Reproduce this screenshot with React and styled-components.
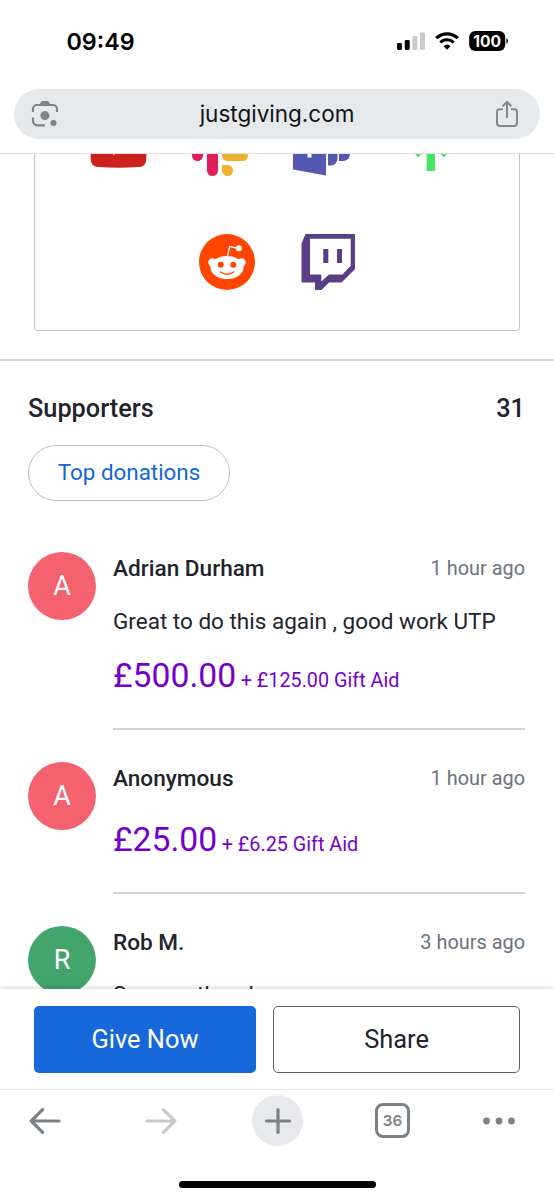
import React from "react";
import styled, { createGlobalStyle } from "styled-components";

const supporters = [
  {
    name: "Adrian Durham",
    time: "1 hour ago",
    message: "Great to do this again , good work UTP",
    amount: "£500.00",
    giftAid: "+ £125.00 Gift Aid",
    color: "#f4616f",
  },
  {
    name: "Anonymous",
    time: "1 hour ago",
    amount: "£25.00",
    giftAid: "+ £6.25 Gift Aid",
    color: "#f4616f",
  },
  {
    name: "Rob M.",
    time: "3 hours ago",
    message: "See you there!",
    color: "#43a56b",
  },
];

function StatusIcons() {
  return (
    <svg width="112" height="22" viewBox="0 0 112 22">
      <rect x="0" y="13" width="5" height="7" rx="1.4" />
      <rect x="7.7" y="10" width="5" height="10" rx="1.4" />
      <rect x="15.4" y="6" width="5" height="14" rx="1.4" fill="#cbcbcb" />
      <rect x="23" y="2.4" width="5" height="17.6" rx="1.4" fill="#cbcbcb" />
      <g fill="none" stroke="#000" strokeWidth="3.1">
        <path d="M39.2 8.2a15.6 15.6 0 0 1 21.6 0" />
        <path d="M43.3 12.5a9.7 9.7 0 0 1 13.4 0" />
      </g>
      <path d="M50 19.7l-3.5-3.5a5.2 5.2 0 0 1 7 0z" />
      <rect x="72.2" y="1" width="36" height="20" rx="6" />
      <path d="M109.4 8.2c2 .6 2 5 0 5.6z" />
      <text
        x="90.2"
        y="16.6"
        fill="#fff"
        fontSize="15.6"
        fontWeight="700"
        textAnchor="middle"
      >
        100
      </text>
    </svg>
  );
}

function LensIcon() {
  return (
    <svg width="28" height="28" viewBox="0 0 28 28" fill="none">
      <path
        d="M2 12V9a4 4 0 0 1 4-4h16a4 4 0 0 1 4 4v3M2 17.5V21a4.3 4.3 0 0 0 4.3 4.3H14"
        stroke="#7f8386"
        strokeWidth="2.2"
      />
      <path
        d="M8.6 4.5l1.3-2.3q.6-1.1 1.7-1.1h4.8q1.1 0 1.7 1.1l1.3 2.3z"
        fill="#7f8386"
      />
      <circle cx="13.9" cy="15.6" r="4.5" fill="#7f8386" />
      <circle cx="22.5" cy="22.9" r="3" fill="#7f8386" />
    </svg>
  );
}

function ShareIcon() {
  return (
    <svg width="24" height="28" viewBox="0 0 24 28">
      <path
        d="M8 9.3H4.5A2.5 2.5 0 0 0 2 11.8V23a3 3 0 0 0 3 3h14a3 3 0 0 0 3-3V11.8a2.5 2.5 0 0 0-2.5-2.5H16M12 18V2M7.6 6.3L12 1.900l4.400 4.400"
        fill="none"
        stroke="#85898d"
        strokeWidth="2"
      />
    </svg>
  );
}

function YoutubeIcon() {
  return (
    <svg width="57" height="56" viewBox="0 0 57 56">
      <path
        d="M8 9Q28.5 7.5 49 9c5 .4 6.7 3 7.2 7q.6 11 0 24c-.5 4-2.2 6.6-7.2 7q-20.5 1.5-41 0c-5-.4-6.7-3-7.2-7q-.6-12 0-24c.5-4 2.2-6.6 7.2-7z"
        fill="#cd201f"
      />
      <path d="M23 20v15l15-7.5z" fill="#fff" />
    </svg>
  );
}

function SlackIcon() {
  return (
    <svg width="56" height="56" viewBox="0 0 56 56">
      <rect y="15" width="26" height="11" rx="5.5" fill="#36c5f0" />
      <path d="M26 11h-5.5A5.5 5.5 0 1 1 26 5.5z" fill="#36c5f0" />
      <rect x="30" width="11" height="26" rx="5.5" fill="#2eb67d" />
      <path d="M45 26v-5.5a5.5 5.5 0 1 1 5.5 5.5z" fill="#2eb67d" />
      <rect x="15" y="30" width="11" height="26" rx="5.5" fill="#e01e5a" />
      <path d="M11 30v5.5A5.5 5.5 0 1 1 5.5 30z" fill="#e01e5a" />
      <rect x="30" y="30" width="26" height="11" rx="5.5" fill="#ecb22e" />
      <path d="M30 45h5.5a5.5 5.5 0 1 1-5.5 5.5z" fill="#ecb22e" />
    </svg>
  );
}

function TeamsIcon() {
  return (
    <svg width="57" height="56" viewBox="0 0 57 56">
      <g fill="#5558af">
        <path d="M0 6.5L33 0v55.5L0 49.5z" />
        <path d="M35 17h9.5v22a6.500 6.500 0 0 1-6.500 6.500h-3z" />
        <path d="M46 19h11v15a7 7 0 0 1-7 7h-4z" />
        <circle cx="39" cy="9" r="6" />
        <circle cx="51" cy="12" r="4.5" />
      </g>
      <path d="M8 18.5l17-1v4l-6.500.4v15.600h-4V22.200l-6.500.3z" fill="#fff" />
    </svg>
  );
}

function LinktreeIcon() {
  return (
    <svg width="44" height="56" viewBox="0 0 44 56" fill="#43e660">
      <path d="M17.7 0H26v14.5L36 4.5l5.6 5.6-10 9.900H44v7.800H31.500l5.500 5.500h-6L22 24l-9 9.300H7l5.500-5.500H0V20h12.300L2.300 10.100l5.600-5.600 9.800 10z" />
      <path d="M17.7 34H26v17h-8.300zM5.300 33.300H13l-3.800 3.900zM31 33.300h7.700l-3.900 3.900z" />
    </svg>
  );
}

function RedditIcon() {
  return (
    <svg width="56" height="56" viewBox="0 0 56 56">
      <circle cx="28" cy="28" r="28" fill="#ff4500" />
      <g fill="#fff">
        <circle cx="13.5" cy="28.5" r="4.2" />
        <circle cx="42.5" cy="28.5" r="4.2" />
        <ellipse cx="28" cy="33.5" rx="16.5" ry="11.5" />
        <circle cx="39.8" cy="14.3" r="3" />
      </g>
      <path
        d="M28.3 23l2.4-10.500 8.500 1.800"
        fill="none"
        stroke="#fff"
        strokeWidth="1.3"
      />
      <circle cx="21.7" cy="30.8" r="3" fill="#ff4500" />
      <circle cx="34.3" cy="30.8" r="3" fill="#ff4500" />
      <path
        d="M21.5 38q6.500 4.600 13 0"
        fill="none"
        stroke="#ff4500"
        strokeWidth="1.4"
        strokeLinecap="round"
      />
    </svg>
  );
}

function TwitchIcon() {
  return (
    <svg width="56" height="56" viewBox="0 0 56 56">
      <path
        d="M4.5 0H54v35L40.5 48.5H28L20.5 56H14v-7.500H.5v-39z"
        fill="#5a3e85"
      />
      <path d="M9 4.7h40.700v27l-8.300 8.800H28l-7.700 7v-7H9z" fill="#fff" />
      <path d="M22.300 15h5v14h-5zM36 15h5v14h-5z" fill="#5a3e85" />
    </svg>
  );
}

function Supporter({ supporter }) {
  return (
    <SupporterRow>
      <Avatar $color={supporter.color}>{supporter.name[0]}</Avatar>
      <SupporterBody>
        <SupporterTop>
          <SupporterName>{supporter.name}</SupporterName>
          <SupporterTime>{supporter.time}</SupporterTime>
        </SupporterTop>
        {supporter.message && <Message>{supporter.message}</Message>}
        {supporter.amount && (
          <Donation>
            <Amount>{supporter.amount}</Amount>
            <GiftAid>{supporter.giftAid}</GiftAid>
          </Donation>
        )}
      </SupporterBody>
    </SupporterRow>
  );
}

function Toolbar() {
  return (
    <ToolbarContainer>
      <ToolbarItem>
        <ToolbarIcon width="32" height="28" viewBox="0 0 32 28">
          <path d="M30 14H2.2M13.6 2.7L2.2 14l11.4 11.3" />
        </ToolbarIcon>
      </ToolbarItem>
      <ToolbarItem>
        <ToolbarIcon $disabled width="32" height="28" viewBox="0 0 32 28">
          <path d="M2 14h27.8M18.4 2.7L29.8 14 18.4 25.3" />
        </ToolbarIcon>
      </ToolbarItem>
      <ToolbarItem>
        <NewTab>
          <ToolbarIcon width="28" height="28" viewBox="0 0 28 28">
            <path d="M2.5 14h23M14 2.5v23" />
          </ToolbarIcon>
        </NewTab>
      </ToolbarItem>
      <ToolbarItem>
        <TabCount>36</TabCount>
      </ToolbarItem>
      <ToolbarItem>
        <svg width="34" height="8" viewBox="0 0 34 8" fill="#7b8287">
          <circle cx="4.5" cy="4" r="3.4" />
          <circle cx="17" cy="4" r="3.4" />
          <circle cx="29.5" cy="4" r="3.4" />
        </svg>
      </ToolbarItem>
    </ToolbarContainer>
  );
}

function App() {
  return (
    <Screen>
      <GlobalStyle />
      <StatusBar>
        <Clock>09:49</Clock>
        <StatusIcons />
      </StatusBar>
      <BrowserHeader>
        <AddressBar>
          <LensIcon />
          <Url>justgiving.com</Url>
          <ShareIcon />
        </AddressBar>
      </BrowserHeader>
      <Page>
        <ShareBox>
          <IconRow>
            <YoutubeIcon />
            <SlackIcon />
            <TeamsIcon />
            <TreeCell>
              <LinktreeIcon />
            </TreeCell>
          </IconRow>
          <IconRow $last>
            <RedditIcon />
            <TwitchIcon />
          </IconRow>
        </ShareBox>
        <SupportersSection>
          <SectionHeading>
            <span>Supporters</span>
            <span>31</span>
          </SectionHeading>
          <TopDonations>Top donations</TopDonations>
          <SupporterList>
            {supporters.map((supporter) => (
              <Supporter key={supporter.name} supporter={supporter} />
            ))}
          </SupporterList>
        </SupportersSection>
      </Page>
      <ActionBar>
        <ActionButton $primary>Give Now</ActionButton>
        <ActionButton>Share</ActionButton>
      </ActionBar>
      <Toolbar />
      <HomeIndicator />
    </Screen>
  );
}

export default App;

const GlobalStyle = createGlobalStyle`
  * {
    box-sizing: border-box;
  }

  body {
    margin: 0;
    background: #fff;
  }

  svg {
    display: block;
    flex-shrink: 0;
  }

  button {
    margin: 0;
    padding: 0;
    font-family: inherit;
  }
`;

const Screen = styled.div`
  display: flex;
  flex-direction: column;
  width: 554px;
  height: 1200px;
  overflow: hidden;
  background: #fff;
  color: #21242c;
  font-family: Roboto, "Liberation Sans", sans-serif;
`;

const StatusBar = styled.div`
  display: flex;
  justify-content: space-between;
  align-items: flex-start;
  height: 89px;
  padding: 30px 45px 0 66.5px;
  color: #000;
  font-family: Inter, sans-serif;
`;

const Clock = styled.div`
  font-size: 23.3px;
  font-weight: 600;
  line-height: 23px;
`;

const BrowserHeader = styled.div`
  height: 65px;
  padding: 0 14px;
  border-bottom: 1px solid #dfdfe1;
`;

const AddressBar = styled.div`
  display: flex;
  justify-content: space-between;
  align-items: center;
  height: 50px;
  padding: 0 21px 0 17px;
  border-radius: 25px;
  background: #e6e9ec;
`;

const Url = styled.div`
  color: #111417;
  font-family: Inter, sans-serif;
  font-size: 22.5px;
  line-height: 30px;
`;

const Page = styled.main`
  display: flow-root;
  height: 835px;
  overflow: hidden;
`;

const ShareBox = styled.div`
  display: flow-root;
  height: 177px;
  margin: 0 34px;
  border: 1px solid #c3c3c3;
  border-top: none;
  border-radius: 0 0 4px 4px;
`;

const IconRow = styled.div`
  display: flex;
  gap: ${({ $last }) => ($last ? "46px" : "45px")};
  margin-top: ${({ $last }) => ($last ? "58px" : "-34px")};
  padding-left: ${({ $last }) => ($last ? "164px" : "55px")};
`;

const TreeCell = styled.div`
  margin-left: 14px;
`;

const SupportersSection = styled.section`
  margin-top: 28px;
  padding: 33px 29px 0 28px;
  border-top: 2px solid #d8d8da;
`;

const SectionHeading = styled.h2`
  display: flex;
  justify-content: space-between;
  margin: 0;
  font-size: 25.3px;
  font-weight: 500;
  line-height: 30px;
`;

const TopDonations = styled.button`
  width: 202px;
  height: 56px;
  margin-top: 21px;
  padding-bottom: 2px;
  border: 1px solid #bcbcbe;
  border-radius: 28px;
  background: #fff;
  color: #1465d8;
  font-size: 22.4px;
`;

const SupporterList = styled.div`
  margin-top: 51px;
`;

const SupporterRow = styled.article`
  display: flex;
  gap: 17px;
  margin-bottom: 32px;
`;

const Avatar = styled.div`
  flex-shrink: 0;
  width: 68px;
  height: 68px;
  border-radius: 50%;
  background: ${({ $color }) => $color};
  color: #fff;
  font-size: 27px;
  line-height: 69px;
  text-align: center;
`;

const SupporterBody = styled.div`
  flex: 1;
  border-bottom: 2px solid #d2d2d4;
`;

const SupporterTop = styled.div`
  display: flex;
  justify-content: space-between;
  align-items: center;
  height: 33px;
`;

const SupporterName = styled.div`
  font-size: 22.6px;
  font-weight: 500;
`;

const SupporterTime = styled.div`
  color: #6b7380;
  font-size: 19.9px;
`;

const Message = styled.p`
  margin: 17.7px 0 -7.2px;
  font-size: 22.5px;
  line-height: 36px;
  white-space: nowrap;
`;

const Donation = styled.div`
  display: flex;
  align-items: baseline;
  gap: 4.5px;
  height: 96.5px;
  padding-top: 22.5px;
  color: #7400d0;
`;

const Amount = styled.span`
  font-size: 33.7px;
  line-height: 44px;
`;

const GiftAid = styled.span`
  font-size: 19.8px;
`;

const ActionBar = styled.div`
  z-index: 1;
  display: flex;
  gap: 17px;
  height: 100px;
  padding: 17px 34px 0;
  background: #fff;
  box-shadow: 0 0 6px rgba(0, 0, 0, 0.24);
`;

const ActionButton = styled.button`
  width: ${({ $primary }) => ($primary ? "222px" : "247px")};
  height: 67px;
  padding-bottom: 2px;
  border: ${({ $primary }) => ($primary ? "none" : "1px solid #5b6373")};
  border-radius: 5px;
  background: ${({ $primary }) => ($primary ? "#1768db" : "#fff")};
  color: ${({ $primary }) => ($primary ? "#fff" : "#21242c")};
  font-size: 25.4px;
`;

const ToolbarContainer = styled.nav`
  z-index: 2;
  display: grid;
  grid-template-columns: 90px 141px 93px 137px 75px;
  height: 92px;
  padding-top: 5px;
  border-top: 1px solid #e6e6e8;
  background: #fff;
`;

const ToolbarItem = styled.div`
  display: flex;
  justify-content: center;
  align-items: center;
  height: 51px;
`;

const ToolbarIcon = styled.svg`
  fill: none;
  stroke: ${({ $disabled }) => ($disabled ? "#c8c9ca" : "#7b8287")};
  stroke-width: 3.2px;
  stroke-linecap: round;
  stroke-linejoin: round;
`;

const NewTab = styled.div`
  display: flex;
  justify-content: center;
  align-items: center;
  width: 51px;
  height: 51px;
  border-radius: 50%;
  background: #e8e9ed;
`;

const TabCount = styled.div`
  width: 35px;
  height: 35px;
  border: 3px solid #7b8287;
  border-radius: 8px;
  color: #7b8287;
  font-family: Inter, sans-serif;
  font-size: 15.2px;
  font-weight: 600;
  line-height: 30px;
  text-align: center;
`;

const HomeIndicator = styled.div`
  z-index: 2;
  width: 197px;
  height: 7px;
  margin: 0 auto;
  border-radius: 4px;
  background: #000;
`;
